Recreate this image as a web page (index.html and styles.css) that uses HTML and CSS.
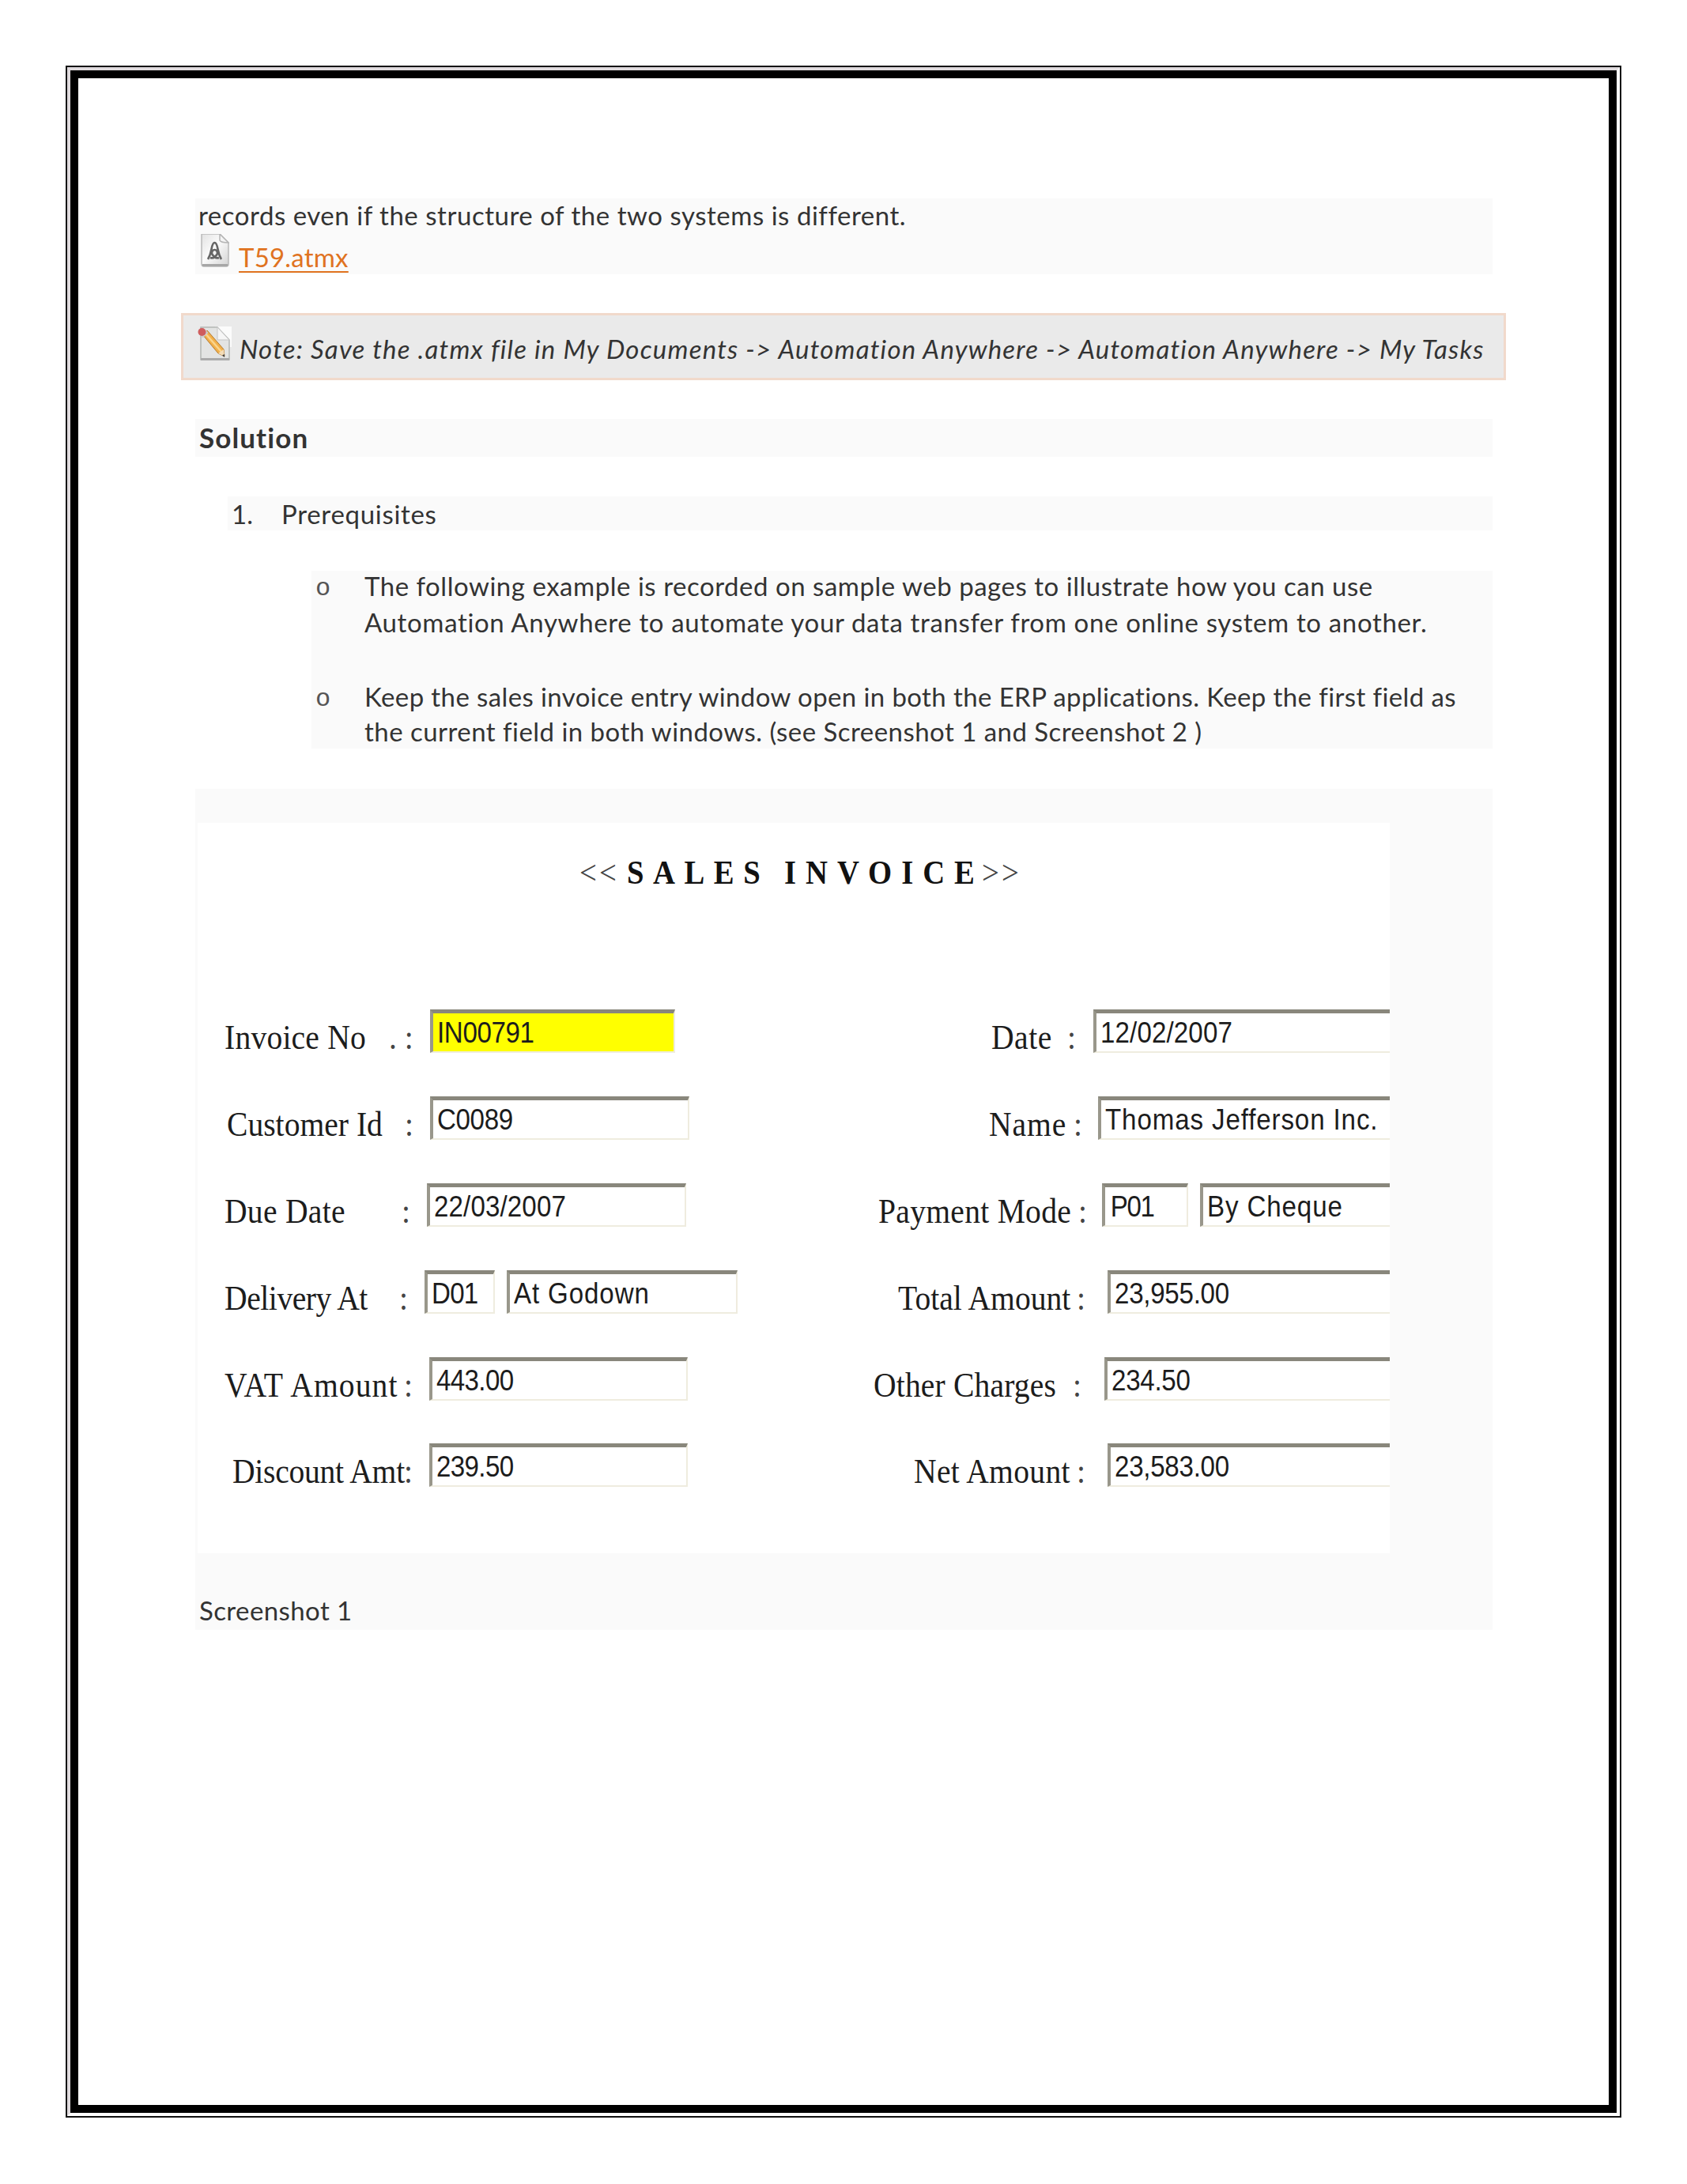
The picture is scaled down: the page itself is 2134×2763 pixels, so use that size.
FILE: index.html
```html
<!DOCTYPE html>
<html lang="en">
<head>
<meta charset="utf-8">
<title>Solution</title>
<link rel="stylesheet" href="styles.css">
</head>
<body>
<div class="frame">
<div class="frame-gap">
<main class="sheet">

  <section class="intro shade">
    <p class="line intro-text">records even if the structure of the two systems is different.</p>
    <p class="attachment">
      <svg class="file-icon" viewBox="0 0 36 42" width="36" height="42">
        <defs><linearGradient id="paper" x1="0" y1="0" x2="1" y2="1"><stop offset="0" stop-color="#e2e2e2"/><stop offset=".45" stop-color="#fbfbfb"/><stop offset="1" stop-color="#d2d2d2"/></linearGradient></defs>
        <path d="M1 0H24L35 11V38Q35 41 32 41H4Q1 41 1 38Z" fill="url(#paper)" stroke="#b9b9b9" stroke-width="1.5"/>
        <path d="M2 39.5H34" stroke="#a6a6a6" stroke-width="3"/>
        <path d="M24 0V8Q25 11 35 11Z" fill="#f4f4f4" stroke="#b5b5b5" stroke-width="1.5"/>
        <path d="M9 32Q12 27 13.500 19Q15 11 17.500 11Q20 11 21.500 19Q23 27 26 32M12 30Q17 32 21 25Q21 20 17.500 20Q14 20 14 25Q18 32 23 30" fill="none" stroke="#666" stroke-width="2.600"/>
      </svg>
      <a class="link">T59.atmx</a>
    </p>
  </section>

  <aside class="note">
    <svg class="note-icon" viewBox="0 0 43 44" width="43" height="44">
      <path d="M22 0H43V26H22Z" fill="#fbfbfb"/>
      <path d="M4 1H25L40 17V42H4Z" fill="#e3e4e3" stroke="#b4b6b4" stroke-width="1.500"/>
      <path d="M25 1V17H40Z" fill="#f6f6f6" stroke="#c5c5c5"/>
      <path d="M4 41.500H40" stroke="#aaa" stroke-width="3"/>
      <path d="M6 10L12 5L33 29L34 38L26 34Z" fill="#f2b04a" stroke="#b57a2c" stroke-width="1"/>
      <path d="M9 8L30 32" stroke="#fbd58c" stroke-width="2.500"/>
      <path d="M26 34L33 29L34 38Z" fill="#f3dcb8"/><path d="M31 36.500L34 35V39Z" fill="#444"/>
      <path d="M4 12L11 5L13.500 8L6.500 14.500Z" fill="#ccc"/>
      <circle cx="5.500" cy="7" r="5" fill="#cf5d5d"/>
    </svg>
    <p class="line note-text">Note: Save the .atmx file in My Documents -&gt; Automation Anywhere -&gt; Automation Anywhere -&gt; My Tasks</p>
  </aside>

  <h2 class="heading shade">Solution</h2>

  <div class="step shade"><span class="step-number">1.</span><span class="step-title">Prerequisites</span></div>

  <ul class="bullets shade">
    <li class="bullet bullet-first">
      <span class="marker">o</span>
      <div>
        <span class="line b1">The following example is recorded on sample web pages to illustrate how you can use</span>
        <span class="line b2">Automation Anywhere to automate your data transfer from one online system to another.</span>
      </div>
    </li>
    <li class="bullet bullet-second">
      <span class="marker">o</span>
      <div>
        <span class="line b3">Keep the sales invoice entry window open in both the ERP applications. Keep the first field as</span>
        <span class="line b4">the current field in both windows. (see Screenshot 1 and Screenshot 2 )</span>
      </div>
    </li>
  </ul>

  <figure class="figure shade">
    <div class="invoice">
      <div class="title"><span class="angle">&lt;&lt;</span><b class="word-sales">SALES</b><b class="word-invoice">INVOICE</b><span class="angle">&gt;&gt;</span></div>

      <div class="row row-1">
        <span class="label n-invoice">Invoice No</span><span class="label colon">. :</span>
        <div class="fields"><div class="field active w-310"><span class="value v-no">IN00791</span></div></div>
        <span class="label n-date">Date</span><span class="label colon">:</span>
        <div class="fields"><div class="field cut"><span class="value v-date">12/02/2007</span></div></div>
      </div>

      <div class="row row-2">
        <span class="label">Customer Id</span><span class="label colon">:</span>
        <div class="fields"><div class="field w-328"><span class="value v-no">C0089</span></div></div>
        <span class="label n-name">Name</span><span class="label colon">:</span>
        <div class="fields"><div class="field cut"><span class="value v-words">Thomas Jefferson Inc.</span></div></div>
      </div>

      <div class="row row-3">
        <span class="label n-due">Due Date</span><span class="label colon">:</span>
        <div class="fields"><div class="field w-328"><span class="value v-date">22/03/2007</span></div></div>
        <span class="label n-due">Payment Mode</span><span class="label colon">:</span>
        <div class="fields"><div class="field w-109"><span class="value v-p01">P01</span></div><div class="field cut"><span class="value v-words">By Cheque</span></div></div>
      </div>

      <div class="row row-4">
        <span class="label n-delivery">Delivery At</span><span class="label colon">:</span>
        <div class="fields"><div class="field w-89"><span class="value v-code">D01</span></div><div class="field w-292"><span class="value v-words">At Godown</span></div></div>
        <span class="label n-total">Total Amount</span><span class="label colon">:</span>
        <div class="fields"><div class="field cut"><span class="value v-sum">23,955.00</span></div></div>
      </div>

      <div class="row row-5">
        <span class="label n-vat">VAT Amount</span><span class="label colon">:</span>
        <div class="fields"><div class="field w-327"><span class="value v-amount">443.00</span></div></div>
        <span class="label n-other">Other Charges</span><span class="label colon">:</span>
        <div class="fields"><div class="field cut"><span class="value v-sum">234.50</span></div></div>
      </div>

      <div class="row row-6">
        <span class="label n-discount">Discount Amt</span><span class="label colon">:</span>
        <div class="fields"><div class="field w-327"><span class="value v-amount">239.50</span></div></div>
        <span class="label n-net">Net Amount</span><span class="label colon">:</span>
        <div class="fields"><div class="field cut"><span class="value v-sum">23,583.00</span></div></div>
      </div>
    </div>
    <figcaption class="caption">Screenshot 1</figcaption>
  </figure>

</main>
</div>
</div>
</body>
</html>
```
FILE: styles.css
```css
* { box-sizing: border-box; }
body { margin: 0; padding: 83px; background: #fff; color: #333; font: 33px/44px Lato, Carlito, sans-serif; }
p, h2, ul, figure { margin: 0; padding: 0; }
ul { list-style: none; }

/* Double page border: hairline outside, heavy rule inside */
.frame { width: 1968px; height: 2596px; border: 2px solid #111; }
.frame-gap { height: 100%; border: 4px solid; border-color: #dfdadd #fff #fff #dfdadd; }
.sheet { height: 100%; border: 10px solid #000; padding: 152px 0 0 148px; background: #fff; }

.shade { width: 1641px; background: #fafafa; }
.line { display: block; white-space: nowrap; }

.intro { height: 96px; }
.intro-text { line-height: 42.5px; padding-left: 4px; letter-spacing: .52px; }
.attachment { display: flex; padding: 2px 0 0 7px; }
.file-icon { flex: none; margin-right: 12px; }
.link { color: #e0731f; line-height: 40px; padding-top: 9px; letter-spacing: .2px; text-decoration: underline 2px; text-underline-offset: 5px; }

.note { display: flex; width: 1676px; height: 85px; margin: 49px 0 0 -18px; padding: 14px 0 0 18px; border: 3px solid #f1d9cb; background: #eaeaea; }
.note-icon { flex: none; margin-right: 10px; }
.note-text { padding-top: 8px; line-height: 40px; font-style: italic; letter-spacing: 1.19px; }

.heading { height: 48px; margin-top: 49px; padding-left: 5px; font-size: 35px; line-height: 47px; font-weight: 700; letter-spacing: 1.1px; }

.step { display: flex; width: 1600px; height: 43px; margin: 50px 0 0 41px; padding-left: 5px; }
.step-number { width: 63px; }
.step-title { letter-spacing: .7px; }

.bullets { width: 1494px; height: 225px; margin: 51px 0 0 147px; padding-left: 5px; }
.bullet { display: flex; position: relative; }
.bullet-first { top: -4px; line-height: 46px; }
.bullet-second { margin-top: 45px; }
.marker { width: 62px; padding-top: 4px; font-family: "Liberation Mono", monospace; font-size: 32px; color: #555; }
.b1 { letter-spacing: .52px; }
.b2 { letter-spacing: .64px; }
.b3 { letter-spacing: .39px; }
.b4 { letter-spacing: .46px; }

.figure { height: 1064px; margin-top: 51px; padding: 43px 0 0 3px; }
.caption { margin-top: 50px; padding-left: 2px; letter-spacing: .4px; }

/* Scanned invoice form */
.invoice { width: 1508px; height: 924px; overflow: hidden; background: #fff; color: #1c1c1c; font: 44px/72px "Liberation Serif", serif; }
.title { display: grid; grid-template-columns: 60px 199px 250px 1fr; height: 236px; padding-left: 483px; font-size: 43px; line-height: 126px; color: #111; }
.title > * { transform: scaleX(.9); transform-origin: 0 0; white-space: nowrap; }
.angle { color: #444; letter-spacing: 3.6px; }
.word-sales { letter-spacing: 12.8px; }
.word-invoice { letter-spacing: 13.3px; }

.row { display: grid; height: 109.9px; padding-left: 34px; }
.row-1 { grid-template-columns: 210px 50px 710px 98px 30.5px 1fr; }
.row-2 { grid-template-columns: 227px 30px 707px 108.5px 29.5px 1fr; padding-left: 37px; }
.row-3 { grid-template-columns: 225.5px 30.5px 570.5px 255.5px 28px 1fr; }
.row-4 { grid-template-columns: 222.5px 30.5px 599px 228px 37px 1fr; }
.row-5 { grid-template-columns: 228.5px 30.5px 562px 253.5px 38.5px 1fr; }
.row-6 { grid-template-columns: 218.5px 30.5px 613px 207.5px 37.5px 1fr; padding-left: 44px; }

.label { transform: scaleX(.9); transform-origin: 0 0; white-space: pre; }
.colon { margin-left: -2px; color: #444; }
.n-invoice { letter-spacing: .22px; }
.n-date { letter-spacing: .56px; }
.n-name { letter-spacing: 1px; }
.n-due { letter-spacing: .3px; }
.n-delivery { letter-spacing: -.5px; }
.n-discount { letter-spacing: -.3px; }
.n-net { letter-spacing: .35px; }
.n-total { letter-spacing: 0; }
.n-vat { letter-spacing: 1.2px; }
.n-other { letter-spacing: .17px; }

.fields { display: flex; gap: 15px; min-width: 0; }
.field { height: 55px; padding-left: 5px; border: solid; border-width: 5px 2px 2px 4px; border-color: #89877c #efecdf #efecdf #99978b; background: #fff; font: 36px/50px "Liberation Sans", sans-serif; }
.field.cut { flex: 1; border-right: 0; }
.field.active { background: #ff0; }
.w-310 { width: 310px; }
.w-328 { width: 328px; }
.w-327 { width: 327px; }
.w-292 { width: 292px; }
.w-109 { width: 109px; }
.w-89 { width: 89px; }

.value { display: block; transform: scaleX(.92); transform-origin: 0 0; white-space: nowrap; }
.v-no { letter-spacing: -.4px; }
.v-date { letter-spacing: .13px; }
.v-words { letter-spacing: .95px; }
.v-p01 { letter-spacing: -1.6px; padding-left: 2px; }
.v-code { letter-spacing: -.8px; }
.v-amount { letter-spacing: -.7px; }
.v-sum { letter-spacing: -.3px; }
```
